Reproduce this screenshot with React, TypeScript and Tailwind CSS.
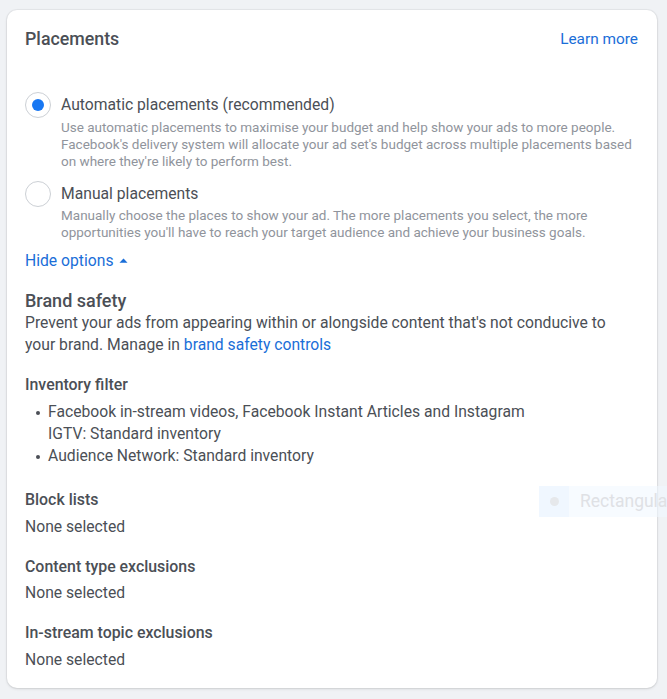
import React from "react";

const font = { fontFamily: "Roboto, 'Noto Sans', Arial, sans-serif" };

function Radio({ checked }: { checked?: boolean }) {
  return (
    <div className="w-[26px] h-[26px] shrink-0 rounded-full border border-[#ccd0d5] bg-white flex items-center justify-center">
      {checked && <div className="w-[12px] h-[12px] rounded-full bg-[#1877f2]" />}
    </div>
  );
}

function Bullet({ children }: { children: React.ReactNode }) {
  return (
    <div className="flex">
      <div className="w-[23px] shrink-0 flex justify-center pt-[10px] pl-[2px]">
        <div className="w-[4px] h-[4px] rounded-full bg-[#4b4f56]" />
      </div>
      <div className="whitespace-nowrap">{children}</div>
    </div>
  );
}

export default function App() {
  return (
    <div
      className="relative w-[667px] h-[699px] overflow-hidden bg-[#f0f2f5] pt-[10px] pl-[7px]"
      style={font}
    >
      <div className="w-[650px] h-[678px] bg-white rounded-[10px] shadow-[0_0_0_1px_rgba(0,0,0,0.04),0_1px_3px_rgba(0,0,0,0.12)] pt-[17px] pl-[18px] pr-[19px] pb-[17px]">
        <div className="flex items-center justify-between h-[24px]">
          <div className="text-[17.8px] font-medium text-[#4b4f56] leading-[24px]">Placements</div>
          <div className="text-[15.4px] text-[#1a6ed8] leading-[24px]">Learn more</div>
        </div>

        <div className="mt-[40.5px] flex gap-[10px]">
          <Radio checked />
          <div>
            <div className="text-[15.7px] leading-[26px] text-[#4b4f56]">Automatic placements (recommended)</div>
            <div className="mt-[1.5px] text-[13.5px] leading-[17px] text-[#90949c] whitespace-nowrap">
              Use automatic placements to maximise your budget and help show your ads to more people.
              <br />
              Facebook's delivery system will allocate your ad set's budget across multiple placements based
              <br />
              on where they're likely to perform best.
            </div>
          </div>
        </div>

        <div className="mt-[10.5px] flex gap-[10px]">
          <Radio />
          <div>
            <div className="text-[15.7px] leading-[26px] text-[#4b4f56]">Manual placements</div>
            <div className="mt-[0.5px] text-[13.5px] leading-[17px] text-[#90949c] whitespace-nowrap">
              Manually choose the places to show your ad. The more placements you select, the more
              <br />
              opportunities you'll have to reach your target audience and achieve your business goals.
            </div>
          </div>
        </div>

        <div className="mt-[10px] flex items-center gap-[6px] text-[15.7px] leading-[20px] text-[#1a6ed8]">
          <span>Hide options</span>
          <svg width="9" height="5" viewBox="0 0 9 5" className="mt-[-1px]">
            <path d="M0.5 4.8 L4.5 0.5 L8.5 4.8 Z" fill="#1a6ed8" />
          </svg>
        </div>

        <div className="mt-[19px] text-[18px] font-medium leading-[22px] text-[#4b4f56]">Brand safety</div>
        <div className="text-[15.7px] leading-[22px] text-[#4b4f56] whitespace-nowrap">
          Prevent your ads from appearing within or alongside content that's not conducive to
          <br />
          your brand. Manage in <span className="text-[#1a6ed8]">brand safety controls</span>
        </div>

        <div className="mt-[18px] text-[15.9px] font-medium leading-[22px] text-[#4b4f56]">Inventory filter</div>
        <div className="mt-[5px] text-[15.7px] leading-[22px] text-[#4b4f56]">
          <Bullet>
            Facebook in-stream videos, Facebook Instant Articles and Instagram
            <br />
            IGTV: Standard inventory
          </Bullet>
          <Bullet>Audience Network: Standard inventory</Bullet>
        </div>

        <div className="mt-[22px] text-[15.9px] font-medium leading-[22px] text-[#4b4f56]">Block lists</div>
        <div className="mt-[5px] text-[15.7px] leading-[22px] text-[#4b4f56]">None selected</div>

        <div className="mt-[18px] text-[15.9px] font-medium leading-[22px] text-[#4b4f56]">Content type exclusions</div>
        <div className="mt-[4px] text-[15.7px] leading-[22px] text-[#4b4f56]">None selected</div>

        <div className="mt-[18px] text-[15.9px] font-medium leading-[22px] text-[#4b4f56]">In-stream topic exclusions</div>
        <div className="mt-[5px] text-[15.7px] leading-[22px] text-[#4b4f56]">None selected</div>
      </div>

      <div className="absolute left-[539px] top-[486px] w-[160px] h-[31px] flex items-center bg-[rgba(240,247,255,0.55)] pointer-events-none">
        <div className="w-[30px] h-full flex items-center justify-center bg-[rgba(230,241,255,0.45)]">
          <div className="w-[9px] h-[9px] rounded-full bg-[#e6e8eb]" />
        </div>
        <div className="ml-[11px] text-[17.5px] text-[#dfe1e5] whitespace-nowrap">Rectangular</div>
      </div>
    </div>
  );
}
